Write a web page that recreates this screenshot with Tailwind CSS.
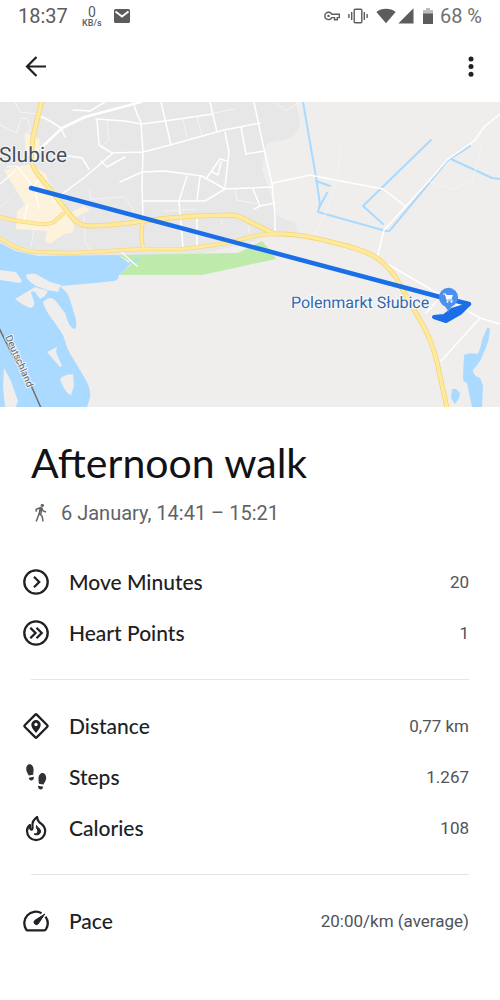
<!DOCTYPE html>
<html lang="en">
<head>
    <meta charset="UTF-8">
    <meta name="viewport" content="width=device-width, initial-scale=1.0">
    <title>Afternoon walk</title>
    <script src="https://cdn.jsdelivr.net/npm/@tailwindcss/browser@4"></script>
</head>
<body class="min-h-screen bg-white font-['Roboto',sans-serif] text-[#202124]">
    <!-- Status bar -->
    <div class="flex h-8 items-center justify-between px-[18px] text-[#5c5c5c]">
        <div class="flex items-center">
            <span class="text-xl leading-8">18:37</span>
            <div class="ml-3.5 flex w-5 flex-col items-center">
                <span class="text-sm leading-[14px]">0</span>
                <span class="text-[9px] leading-[8px] font-medium">KB/s</span>
            </div>
            <svg class="ml-3 h-4 w-4" viewBox="0 0 16 16" fill="none">
                <rect y="1" width="16" height="14" rx="1.500" fill="#5c5c5c"/>
                <path d="M1.500 3.500 8 8.500l6.500-5" stroke="#fff" stroke-width="1.800"/>
            </svg>
        </div>
        <div class="flex items-center">
            <!-- VPN key -->
            <svg class="h-4 w-4" viewBox="0 0 16 16" fill="none" stroke="#5c5c5c" stroke-width="1.400">
                <path d="M7.800 6.200A3.700 3.700 0 1 0 7.800 9.600H10.500V11.800H13.300V9.600H15.300V6.200Z"/>
                <circle cx="4.500" cy="7.900" r="1.200" fill="#5c5c5c" stroke="none"/>
            </svg>
            <!-- Vibrate -->
            <svg class="ml-2 h-4 w-5" viewBox="0 0 20 16" fill="none" stroke="#5c5c5c" stroke-width="1.400">
                <rect x="6.200" y="1.200" width="7.600" height="13.600" rx="1"/>
                <path d="M3.700 4v8M.9 6v4M16.300 4v8M19.100 6v4"/>
            </svg>
            <!-- Wi-Fi and signal -->
            <svg class="ml-2 h-4 w-5" viewBox="0 0 20 16" fill="#5c5c5c"><path d="M.4 4C5.500-.2 14.500-.2 19.600 4L10 15.200Z"/></svg>
            <svg class="ml-0.5 h-4 w-4" viewBox="0 0 16 16" fill="#5c5c5c"><path d="M15.500.3V15.500H.3Z"/></svg>
            <!-- Battery -->
            <svg class="ml-2 h-4 w-3" viewBox="0 0 12 16">
                <path d="M4 0h4v2h3v4H1V2h3Z" fill="#bdbdbd"/>
                <path d="M1 5.500h10V16H1Z" fill="#5c5c5c"/>
            </svg>
            <span class="ml-1.5 text-xl leading-8 text-[#707070]">68 %</span>
        </div>
    </div>

    <!-- App bar -->
    <header class="flex h-[70px] items-center justify-between pl-6 pr-[17px]">
        <button type="button" aria-label="Back">
            <svg class="h-6 w-6" viewBox="0 0 24 24" fill="none" stroke="#202124" stroke-width="2.200"><path d="M22 11.500H3.500M12.500 2 3 11.500l9.500 9.500"/></svg>
        </button>
        <button type="button" aria-label="More options">
            <svg class="h-6 w-6" viewBox="0 0 24 24" fill="#202124"><circle cx="12" cy="4" r="2.500"/><circle cx="12" cy="11.600" r="2.500"/><circle cx="12" cy="19.200" r="2.500"/></svg>
        </button>
    </header>

    <main>
        <!-- Route map -->
        <svg class="block aspect-[500/305] w-full" viewBox="0 0 500 305" role="img" aria-label="Route map" fill="none" stroke-linecap="round" stroke-linejoin="round">
            <rect width="500" height="305" fill="#efeeec"/>
            <!-- Town area -->
            <path d="M0 0H296L300 20Q298 34 288 37L272 40Q265 41 265 48L262 68 268 85 277 113Q288 120 295 120L298 133 275 132 245 142 200 152 120 155H0Z" fill="#e7e7e7"/>
            <path d="M0 118 30 124 35 147 0 140Z" fill="#e2e6e9"/>
            <g fill="#fdf2dc">
                <path d="M25 30 40 38 38 60 33 60 25 46Z"/>
                <path d="M4 68 30 62 46 72 53 91 68 112 74 124 73 131 64 132 50 142 45 139 47 129 16 127 17 109 25 103Z"/>
                <path d="M72 110 84 104 90 108 76 115Z"/>
            </g>
            <!-- River and ponds -->
            <g fill="#aadaff">
                <path d="M0 141 15 149 38 154 118 153 130 162 119 173Q119 178 114 179L95 181 60 184 67 191Q70 196 76 218 77 227 74 227 71 226 68 220L65 211 55 198Q50 193 43 200 44 207 55 221L63 233 68 248 87 280Q91 290 90 295L87 305H0Z"/>
                <path d="M487 226Q490 225 490 228L488 240 482 255Q480 260 473 268 473 274 480 276L483 283 482 305H472L467 281Q463 280 463 276L464 253Q470 250 477 252 480 250 482 238Z"/>
                <path d="M452 287 456 287 460 291 459 296 455 302 451 296Z"/>
            </g>
            <g fill="#efeeec">
                <path d="M0 168 16 170 22 179 20 181 0 178Z"/>
                <path d="M26 173Q30 171 36 172L50 180 61 183 58 190 47 188 36 184Q26 178 26 173Z"/>
                <path d="M15 197 35 185 48 189 45 194 40 197 35 190Q31 188 31 191L34 199Q35 206 30 206 22 203 15 197Z"/>
                <path d="M47 250 57 245 56 250 62 264 60 265Z"/>
                <path d="M60 278Q61 273 73 272L74 284 71 293Q66 292 60 278Z"/>
                <path d="M4 266 11 279 18 299 16 305H5L3 285Z"/>
            </g>
            <path d="M118 153 238 151 262 139 270 148 276 157 202 173 119 173 133 161Z" fill="#beeaac"/>
            <path d="m119 172 11-11 9-4" stroke="#aadaff" stroke-width="2"/>
            <!-- Canals -->
            <g stroke="#aadaff" stroke-width="2">
                <path d="m303 0 13 75 4 27-2 8 68 19q3 1 5-2l34-41 22-27 23-15"/>
                <path d="m316 79 14 5M327 91l-8 15M431 38l-68 66 20 18M451 57l41 19 8 1"/>
            </g>
            <!-- Minor streets -->
            <g stroke="#fff" stroke-width="1.500">
                <path d="M41 46 62 26 85 15 141 0" stroke-width="2.500"/>
                <path d="M40 14 50 19 61 26 65 35M73 8 90 9 105 0M133 0 137 12 141 21 143 50 142 82 143 118M96 17 125 19 141 22 165 19 213 12M97 18 99 43 112 51 143 50 170 43 224 28 260 21"/>
                <path d="M112 52 85 75 62 92M101 59 107 65 125 55M63 53 82 56 89 67M161 0 171 43M210 0 217 30M254 0 262 38 272 82 275 114 275 130M241 25 246 52 264 49M225 30 229 50 225 86"/>
                <path d="M120 80 142 70 165 69 202 74 225 87 273 85M273 81 310 73 335 78 383 87 405 104M143 99 205 99 225 87M179 100 183 145M197 116 197 145M253 87 260 104 275 101M260 104 254 107M206 77 220 57 227 59M211 69 218 73 221 60M187 74 179 99M200 75 197 98"/>
                <path d="M500 12 485 24 474 39 447 58 429 79 384 128 377 156 480 216 500 222M480 216 441 259M437 199 426 211"/>
                <path d="M7 65 17 64 35 87 39 107M0 82 15 69M40 76 55 100M38 78 31 89M28 102 24 118M120 149 137 164" stroke-width="1.200"/>
            </g>
            <g stroke="#f4f4f4" stroke-width="1">
                <path d="M0 23 17 31 21 16 28 17 30 27 24 35M15 0 20 10 38 12M107 19 109 38 103 43M183 17 187 36M197 15 202 33M214 11 235 7M89 88 91 97 125 95 133 107 133 117M84 114 85 140 91 149M31 144 34 128M235 87 237 98 257 102M0 105 10 97M165 109 196 107M222 118 221 123M249 125 249 131M341 46 337 76 327 109 316 130 312 137M476 39 482 44 472 79 458 85 454 88 430 80M276 0 286 9 299 0"/>
            </g>
            <!-- Main roads: darker casing with a lighter line over it -->
            <g stroke="#f3d678" stroke-width="5">
                <path d="M42-2 33 35 31 58Q33 67 40 75L53 91 70 113Q76 121 83 123 95 126 143 119L170 116 195 114 232 113Q240 114 248 119L275 132Q300 131 335 141 365 148 377 156 393 168 400 183L420 218Q431 236 437 260L447 306"/>
                <path d="M0 136Q18 149 37 150L70 151 143 147 182 147Q210 144 232 140L258 133 275 132" stroke-width="4"/>
                <path d="M0 115 17 119 40 122Q53 123 57 117L63 112M143 120Q140 131 143 146" stroke-width="4"/>
            </g>
            <g stroke="#ffe99d" stroke-width="3.400">
                <path d="M42-2 33 35 31 58Q33 67 40 75L53 91 70 113Q76 121 83 123 95 126 143 119L170 116 195 114 232 113Q240 114 248 119L275 132Q300 131 335 141 365 148 377 156 393 168 400 183L420 218Q431 236 437 260L447 306"/>
                <path d="M0 136Q18 149 37 150L70 151 143 147 182 147Q210 144 232 140L258 133 275 132" stroke-width="2.800"/>
                <path d="M0 115 17 119 40 122Q53 123 57 117L63 112M143 120Q140 131 143 146" stroke-width="2.800"/>
            </g>
            <!-- Border -->
            <path d="M-1 226 12 252 30 281 41 306" stroke="#707070" stroke-width="1.500"/>
            <g font-family="Roboto, sans-serif" text-rendering="geometricPrecision" paint-order="stroke" stroke="#fff" stroke-opacity=".8" stroke-width="2">
                <text x="-1" y="60" font-size="21" fill="#46505e">Slubice</text>
                <text x="291" y="206" font-size="16" fill="#2f68b2">Polenmarkt Słubice</text>
                <text transform="translate(5 235) rotate(66)" font-size="10" fill="#596572">Deutschland</text>
            </g>
            <!-- Recorded route -->
            <path d="M31 86 440 195 469 202" stroke="#1a6ee8" stroke-width="4.500"/>
            <path d="M434 215 446 219 460 211 468 203 452 208 444 214Z" fill="#1a6ee8" stroke="#1a6ee8" stroke-width="4"/>
            <!-- Shop pin -->
            <path d="M448.500 211Q448 206 442 202.500A9.600 9.600 0 1 1 455 202.500Q449 206 448.500 211Z" fill="#4d91ef"/>
            <path d="M443.500 192h2l1.700 6h5" stroke="#fff" stroke-width="1.200"/>
            <path d="M445.500 193h7.500l-1.500 4h-5Z" fill="#fff"/>
            <circle cx="447.500" cy="199.800" r="1" fill="#fff"/><circle cx="451.500" cy="199.800" r="1" fill="#fff"/>
        </svg>

        <!-- Title -->
        <div class="h-[149px] px-[31px] pt-8">
            <h1 class="font-['Lato',sans-serif] text-[41px] leading-12 text-[#111214]">Afternoon walk</h1>
            <p class="mt-3 flex items-center gap-2.5 text-xl leading-7 text-[#5f6368]">
                <svg class="h-5 w-5" viewBox="0 0 20 20" fill="none" stroke="#5f6368" stroke-width="1.500">
                    <circle cx="11.300" cy="2.300" r="1.600" fill="#5f6368" stroke="none"/>
                    <path d="M5.200 8.800V6.200L9.300 4.700 8.200 10.500 5.200 18.500M8.200 10.500l3 2.800.8 5.200M9.300 4.700l1.400.3 1.500 3 2.800 1M10.700 5.200 9.800 11.500"/>
                </svg>
                6 January, 14:41 – 15:21
            </p>
        </div>

        <dl class="pb-[21px]">
            <div class="flex h-[51px] items-center pl-[22px] pr-[31px]">
                <svg class="h-7 w-7" viewBox="0 0 28 28" fill="none" stroke="#202124" stroke-width="2.300"><circle cx="14" cy="14" r="11.700"/><path d="m12 8.800 5.200 5.200L12 19.200"/></svg>
                <dt class="ml-[19px] flex-1 font-['Lato',sans-serif] text-[21px] font-medium">Move Minutes</dt>
                <dd class="text-[17px] leading-7 text-[#505358]">20</dd>
            </div>
            <div class="flex h-[51px] items-center pl-[22px] pr-[31px]">
                <svg class="h-7 w-7" viewBox="0 0 28 28" fill="none" stroke="#202124" stroke-width="2.300"><circle cx="14" cy="14" r="11.700"/><path d="m8.300 8.800 5.200 5.200-5.200 5.200M14.500 8.800l5.200 5.200-5.200 5.200"/></svg>
                <dt class="ml-[19px] flex-1 font-['Lato',sans-serif] text-[21px] font-medium">Heart Points</dt>
                <dd class="text-[17px] leading-7 text-[#505358]">1</dd>
            </div>
        </dl>
        <hr class="mx-[31px] border-[#e4e5e6]">
        <dl class="pt-5 pb-[21px]">
            <div class="flex h-[51px] items-center pl-[22px] pr-[31px]">
                <svg class="h-7 w-7" viewBox="0 0 28 28"><rect x="5.500" y="5.500" width="17" height="17" rx="1" transform="rotate(45 14 14)" fill="none" stroke="#202124" stroke-width="2.300"/><path d="M14 21c-2.500-3-4.700-5.400-4.700-8.200a4.700 4.700 0 0 1 9.400 0C18.700 15.600 16.500 18 14 21Z" fill="#202124"/><circle cx="14" cy="12.500" r="1.700" fill="#fff"/></svg>
                <dt class="ml-[19px] flex-1 font-['Lato',sans-serif] text-[21px] font-medium">Distance</dt>
                <dd class="text-[17px] leading-7 text-[#505358]">0,77 km</dd>
            </div>
            <div class="flex h-[51px] items-center pl-[22px] pr-[31px]">
                <svg class="h-7 w-7" viewBox="0 0 28 28" fill="#303236">
                    <path d="M4.200 6C4.200 3.200 5.500 1.200 7.600 1.200c2.500 0 4 2.500 4 5.500 0 2-.3 3.300-.4 5l-4.600.8C6.100 10.500 4.200 9 4.200 6ZM6.800 14.700l5-.9c.4 2-.5 3.500-2.200 3.700-1.600.2-2.600-1-2.800-2.800Z"/>
                    <path d="M24.200 15c0-2.800-1.500-4.900-3.700-4.900-2.500 0-4 2.700-4 5.700 0 2 .3 3.300.4 5l4.600.8c.5-2 2.700-3.500 2.700-6.600ZM21.200 23.700l-5-.9c-.4 2 .5 3.500 2.200 3.700 1.600.2 2.600-1 2.800-2.800Z"/>
                </svg>
                <dt class="ml-[19px] flex-1 font-['Lato',sans-serif] text-[21px] font-medium">Steps</dt>
                <dd class="text-[17px] leading-7 text-[#505358]">1.267</dd>
            </div>
            <div class="flex h-[51px] items-center pl-[22px] pr-[31px]">
                <svg class="h-7 w-7" viewBox="0 0 28 28" fill="none" stroke="#202124" stroke-width="2.200" stroke-linejoin="round">
                    <path d="M15.200 3C11.500 5.500 10 9 10.500 12.500c.2 1.700.2 3-.8 3.200-1.400.2-2-1.800-1.700-4.700C6 12.500 5 14.700 5 17a9 9 0 0 0 18.200 0c0-5.500-3.800-6.500-6.300-9.200-1.100-1.300-1.700-2.800-1.700-4.800Z"/>
                    <path d="M14.500 11.500c-1 3.500 1.800 3.300 1.300 6-.3 1.700-1.800 2.500-3.800 2.400 1.500 1.700 6.600 1.300 6.600-2.700 0-3-3.300-3-4.100-5.700Z" fill="#202124" stroke-width="1"/>
                </svg>
                <dt class="ml-[19px] flex-1 font-['Lato',sans-serif] text-[21px] font-medium">Calories</dt>
                <dd class="text-[17px] leading-7 text-[#505358]">108</dd>
            </div>
        </dl>
        <hr class="mx-[31px] border-[#e4e5e6]">
        <dl class="pt-5 pb-[21px]">
            <div class="flex h-[51px] items-center pl-[22px] pr-[31px]">
                <svg class="h-7 w-7" viewBox="0 0 28 28" fill="none" stroke="#202124" stroke-width="2.300" stroke-linejoin="round">
                    <path d="M19.500 6.200A11.500 11.500 0 0 0 4.200 22.500Q4.700 23.300 5.500 23.300H22.500Q23.300 23.300 23.800 22.500A11.500 11.500 0 0 0 23.500 9.700"/>
                    <path d="M22.800 7 16.200 16.800A2.400 2.400 0 0 1 12.700 13.500Z" fill="#202124" stroke-width="1"/>
                </svg>
                <dt class="ml-[19px] flex-1 font-['Lato',sans-serif] text-[21px] font-medium">Pace</dt>
                <dd class="text-[17px] leading-7 text-[#505358]">20:00/km (average)</dd>
            </div>
        </dl>
    </main>
</body>
</html>
